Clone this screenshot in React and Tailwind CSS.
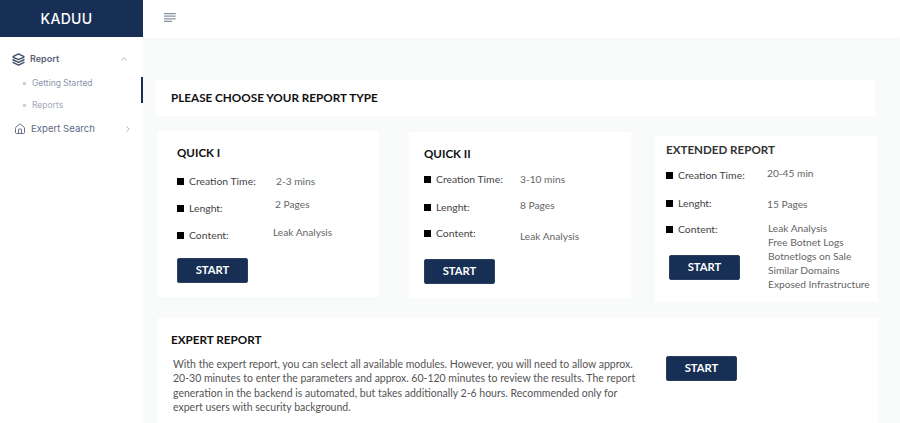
import { ChevronUp, ChevronRight, Layers, Home } from "lucide-react";

const Row = ({ label, value, className = "", valueClass = "" }) => (
  <div className={`flex ${className}`}>
    <div className="w-[99px] shrink-0 flex items-center text-[10.4px] leading-[16px] text-[#444]">
      <span className="w-[7px] h-[7px] bg-black mr-[5px]"></span>
      {label}
    </div>
    <div className={`text-[10.2px] leading-[14px] text-[#666] ${valueClass}`}>{value}</div>
  </div>
);

const StartButton = ({ className = "" }) => (
  <button className={`w-[71px] h-[25px] bg-[#172f55] rounded-[2px] border border-[#2a3f60] text-white text-[11.2px] font-bold ${className}`}>
    START
  </button>
);

export default function App() {
  return (
    <div className="flex w-[900px] h-[423px] overflow-hidden bg-[#f9fbfb]" style={{ fontFamily: "Lato, sans-serif" }}>
      {/* Sidebar */}
      <aside className="w-[143px] shrink-0 bg-white relative" style={{ fontFamily: "Inter, sans-serif" }}>
        <div className="h-[37px] bg-[#172f55] flex items-center justify-center pr-[10px] text-white text-[14px] font-medium tracking-[0.3px]">
          KADUU
        </div>
        <div className="pt-[14px]">
          <div className="flex items-center pl-[12px] pr-[14px] h-[16px]">
            <Layers size={13} strokeWidth={2.6} className="text-[#3f4f6b]" />
            <span className="ml-[5px] text-[9px] font-semibold text-[#5c5f78]">Report</span>
            <ChevronUp size={10} className="ml-auto text-[#a0a6b0]" />
          </div>
          <div className="mt-[8px] pl-[23px] flex items-center h-[16px] text-[8.5px] text-[#8d94aa]">
            <span className="w-[3px] h-[3px] rounded-full border border-[#9aa0b4] mr-[6px]"></span>
            Getting Started
          </div>
          <div className="mt-[6px] pl-[23px] flex items-center h-[16px] text-[8.5px] text-[#a5aabb]">
            <span className="w-[3px] h-[3px] rounded-full border border-[#9aa0b4] mr-[6px]"></span>
            Reports
          </div>
          <div className="mt-[6px] flex items-center pl-[14px] pr-[10px] h-[20px]">
            <Home size={12} className="text-[#66708a]" />
            <span className="ml-[5px] text-[9.6px] text-[#5c6a86]">Expert Search</span>
            <ChevronRight size={10} className="ml-auto text-[#a0a6b0]" />
          </div>
        </div>
        <div className="absolute right-0 top-[77px] w-[2px] h-[26px] bg-[#172f55]"></div>
      </aside>

      <div className="flex-1 min-w-0">
        {/* Top bar */}
        <header className="h-[38px] bg-white flex items-center pl-[21px] shadow-[0_1px_3px_rgba(0,0,0,0.03)]">
          <svg width="12" height="9" viewBox="0 0 12 9" className="text-[#8a93a3] -mt-[3px]" fill="none" stroke="currentColor" strokeWidth="1.2">
            <path d="M0 .6h12M0 3.2h11.5M0 5.8h11.5M0 8.4h8" />
          </svg>
        </header>

        <main className="pl-[13px] pt-[42px]">
          <div className="w-[719px] h-[36px] bg-white flex items-center pl-[15px] text-[11.7px] font-bold text-[#111]">
            PLEASE CHOOSE YOUR REPORT TYPE
          </div>

          <div className="flex items-start mt-[15px] ml-[1px]">
            <section className="w-[222px] h-[166px] bg-white pl-[20px] pt-[14px]">
              <h2 className="text-[11.6px] leading-[16px] font-bold text-[#111]">QUICK I</h2>
              <Row className="mt-[12px] h-[16px] items-center" label="Creation Time:" value="2-3 mins" valueClass="-mt-[1px]" />
              <Row className="mt-[11px] h-[16px]" label="Lenght:" value="2 Pages" valueClass="-mt-[3px] -ml-[1px]" />
              <Row className="mt-[11px] h-[16px]" label="Content:" value="Leak Analysis" valueClass="-mt-[2px] -ml-[3px]" />
              <StartButton className="mt-[15px]" />
            </section>

            <section className="w-[222px] h-[166px] bg-white ml-[30px] mt-[1px] pl-[15px] pt-[14px]">
              <h2 className="text-[11.6px] leading-[16px] font-bold text-[#111]">QUICK II</h2>
              <Row className="mt-[9px] h-[16px] items-center" label="Creation Time:" value="3-10 mins" valueClass="-mt-[1px] -ml-[3px]" />
              <Row className="mt-[12px] h-[16px]" label="Lenght:" value="8 Pages" valueClass="-mt-[1px] -ml-[3px]" />
              <Row className="mt-[10px] h-[16px]" label="Content:" value="Leak Analysis" valueClass="mt-[4px] -ml-[3px]" />
              <StartButton className="mt-[18px]" />
            </section>

            <section className="w-[222px] h-[166px] bg-white ml-[24px] mt-[5px] pl-[11px] pt-[6px]">
              <h2 className="text-[11.6px] leading-[16px] font-bold text-[#333]">EXTENDED REPORT</h2>
              <Row className="mt-[9px] h-[16px]" label="Creation Time:" value="20-45 min" valueClass="-mt-[1px] ml-[2px]" />
              <Row className="mt-[12px] h-[16px]" label="Lenght:" value="15 Pages" valueClass="mt-[2px] ml-[2px]" />
              <div className="flex mt-[10px]">
                <div className="w-[102px] shrink-0">
                  <Row className="h-[16px]" label="Content:" value="" />
                  <StartButton className="mt-[18px] ml-[3px]" />
                </div>
                <div className="text-[10.2px] leading-[14px] text-[#666] whitespace-nowrap">
                  <div>Leak Analysis</div>
                  <div>Free Botnet Logs</div>
                  <div>Botnetlogs on Sale</div>
                  <div>Similar Domains</div>
                  <div>Exposed Infrastructure</div>
                </div>
              </div>
            </section>
          </div>

          <section className="w-[721px] h-[110px] bg-white ml-[1px] mt-[16px] pl-[14px] pt-[13px] flex">
            <div className="w-[495px] shrink-0">
              <h2 className="text-[11.7px] leading-[16px] font-bold text-[#111]">EXPERT REPORT</h2>
              <p className="mt-[10px] ml-[2px] text-[10.5px] leading-[14.4px] text-[#555] whitespace-nowrap">
                With the expert report, you can select all available  modules. However, you will need to allow approx.
                <br />
                20-30 minutes to enter the parameters and approx. 60-120 minutes to review the results. The report
                <br />
                generation in the backend is automated, but takes additionally 2-6 hours. Recommended only for
                <br />
                expert users with security background.
              </p>
            </div>
            <StartButton className="mt-[25px]" />
          </section>
        </main>
      </div>
    </div>
  );
}
